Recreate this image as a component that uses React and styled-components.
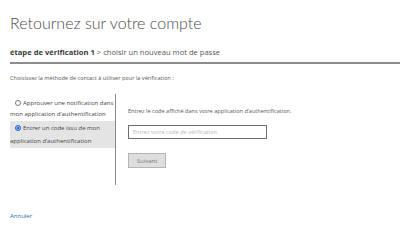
import React from 'react'
import styled, { createGlobalStyle } from 'styled-components'

const GlobalStyle = createGlobalStyle`
  html, body {
    margin: 0;
    padding: 0;
    background: #ffffff;
  }
  body {
    font-family: 'Open Sans', 'Liberation Sans', sans-serif;
    color: #505050;
  }
`

const PageStyle = styled.div`
  width: 400px;
  height: 250px;
  padding-left: 10px;
  box-sizing: border-box;
  overflow: hidden;
`

const TitleStyle = styled.h1`
  margin: 0;
  padding-top: 12px;
  font-family: Lato, 'Open Sans', sans-serif;
  font-size: 16px;
  line-height: 22px;
  font-weight: 300;
  color: #4a4a4a;
  white-space: nowrap;
`

const BreadcrumbStyle = styled.div`
  margin-top: 12px;
  padding-bottom: 4px;
  border-bottom: 2px solid #8c8c8c;
  font-size: 7.6px;
  line-height: 12px;
  color: #555;
  white-space: nowrap;
`

const StepStyle = styled.span`
  font-weight: 700;
  color: #3a3a3a;
`

const InstructionStyle = styled.p`
  margin: 10px 0 0;
  font-size: 5.6px;
  line-height: 8px;
  color: #555;
`

const MethodsStyle = styled.div`
  display: flex;
  margin-top: 12px;
`

const OptionListStyle = styled.div`
  width: 105px;
  padding-top: 2px;
`

const OptionStyle = styled.div`
  padding: ${p => (p.$selected ? '1px 0 1px' : '2px 0 1px')};
  background: ${p => (p.$selected ? '#e4e4e4' : 'transparent')};
  font-size: 6px;
  line-height: ${p => (p.$selected ? '12.5px' : '11px')};
  color: #444;
`

const RadioStyle = styled.span`
  display: inline-block;
  box-sizing: border-box;
  width: 6px;
  height: 6px;
  margin: 0 2px 0 5px;
  vertical-align: -0.5px;
  border-radius: 50%;
  border: 1px solid ${p => (p.$checked ? '#2a6fd0' : '#777')};
  background: ${p => (p.$checked ? '#2a6fd0' : '#fff')};
  box-shadow: ${p => (p.$checked ? 'inset 0 0 0 0.5px #fff' : 'none')};
`

const PanelStyle = styled.div`
  height: 91px;
  border-left: 1px solid #888;
  padding-left: 12px;
  padding-top: 13px;
  box-sizing: border-box;
`

const PanelTextStyle = styled.p`
  margin: 0;
  font-size: 5.6px;
  line-height: 8px;
  color: #555;
  white-space: nowrap;
`

const CodeInputStyle = styled.input`
  display: block;
  box-sizing: border-box;
  width: 139px;
  height: 14px;
  margin-top: 10px;
  padding: 0 4px;
  border: 1px solid #6d6d6d;
  font-family: 'Open Sans', 'Liberation Sans', sans-serif;
  font-size: 5.6px;
  color: #444;
  outline: none;
  &::placeholder {
    color: #b8b8b8;
  }
`

const ButtonStyle = styled.button`
  display: block;
  box-sizing: border-box;
  width: 38px;
  height: 15px;
  margin-top: 14px;
  padding: 0;
  border: 1px solid #b5b5b5;
  background: #dedede;
  font-family: 'Open Sans', 'Liberation Sans', sans-serif;
  font-size: 6px;
  color: #7a7a7a;
`

const CancelLinkStyle = styled.a`
  display: inline-block;
  margin-top: 27px;
  font-size: 6px;
  line-height: 8px;
  color: #2a6cb0;
  text-decoration: none;
`

const options = [
  { key: 'notify', label: 'Approuver une notification dans mon application d\u2019authentification', checked: false },
  { key: 'code', label: 'Entrer un code issu de mon application d\u2019authentification', checked: true }
]

export default function App() {
  return (
    <>
      <GlobalStyle />
      <PageStyle>
        <TitleStyle>Retournez sur votre compte</TitleStyle>
        <BreadcrumbStyle>
          <StepStyle>étape de vérification 1</StepStyle> &gt; choisir un nouveau mot de passe
        </BreadcrumbStyle>
        <InstructionStyle>Choisissez la méthode de contact à utiliser pour la vérification :</InstructionStyle>
        <MethodsStyle>
          <OptionListStyle>
            {options.map(option => (
              <OptionStyle key={option.key} $selected={option.checked}>
                <RadioStyle $checked={option.checked} />
                {option.label}
              </OptionStyle>
            ))}
          </OptionListStyle>
          <PanelStyle>
            <PanelTextStyle>Entrez le code affiché dans votre application d’authentification.</PanelTextStyle>
            <CodeInputStyle placeholder="Entrez votre code de vérification" />
            <ButtonStyle>Suivant</ButtonStyle>
          </PanelStyle>
        </MethodsStyle>
        <CancelLinkStyle href="#">Annuler</CancelLinkStyle>
      </PageStyle>
    </>
  )
}
